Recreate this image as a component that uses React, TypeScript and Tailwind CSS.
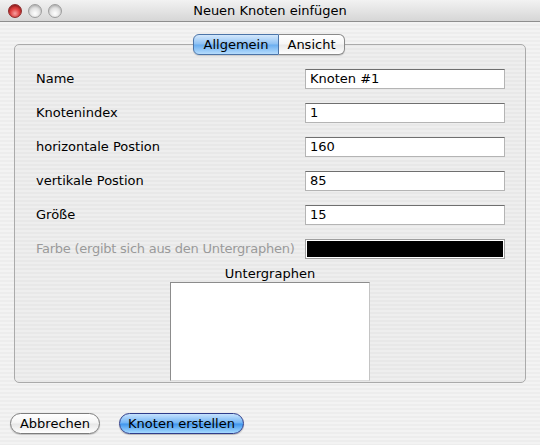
import React from 'react';

const fields = [
    { label: 'Name', value: 'Knoten #1' },
    { label: 'Knotenindex', value: '1' },
    { label: 'horizontale Postion', value: '160' },
    { label: 'vertikale Postion', value: '85' },
    { label: 'Größe', value: '15' },
];

function Light({ red }: { red?: boolean }) {
    return (
        <div
            className={
                red
                    ? 'w-[14px] h-[14px] rounded-full border border-[#8c2a2a] bg-[radial-gradient(circle_at_50%_70%,#f7a0a0_0%,#e0403f_45%,#a51c1c_100%)] shadow-[inset_0_1px_2px_rgba(0,0,0,0.3)]'
                    : 'w-[14px] h-[14px] rounded-full border border-[#9d9d9d] bg-[radial-gradient(circle_at_50%_70%,#ffffff_0%,#e2e2e2_50%,#b9b9b9_100%)] shadow-[inset_0_1px_2px_rgba(0,0,0,0.15)]'
            }
        />
    );
}

export default function App() {
    return (
        <div className="w-[540px] h-[445px] flex flex-col overflow-hidden text-[13px] text-black font-['DejaVu_Sans',sans-serif] bg-[repeating-linear-gradient(180deg,#ededed_0px,#ededed_2px,#f3f3f3_2px,#f3f3f3_4px)]">
            {/* title bar */}
            <div className="relative h-[22px] flex items-center justify-center border-b border-[#8e8e8e] bg-[linear-gradient(180deg,#f2f2f2,#d6d6d6)]">
                <div className="absolute left-[8px] top-[4px] flex gap-[6px]">
                    <Light red />
                    <Light />
                    <Light />
                </div>
                <span className="text-[13px]">Neuen Knoten einfügen</span>
            </div>

            <div className="flex-1 flex flex-col px-[14px] pt-[22px]">
                <div className="relative h-[339px] border border-[#aaaaaa] rounded-[5px] bg-black/[0.02] flex flex-col">
                    {/* tabs */}
                    <div className="absolute left-0 right-0 -top-[11px] flex justify-center">
                        <div className="flex ml-[-2px] h-[21px] shadow-[0_1px_1px_rgba(0,0,0,0.15)] rounded-[6px]">
                            <div className="w-[86px] flex items-center justify-center rounded-l-[6px] border border-[#4b74a8] bg-[linear-gradient(180deg,#d4e8fc_0%,#8ec1f3_48%,#6aaef0_52%,#b6dcfc_100%)]">
                                Allgemein
                            </div>
                            <div className="w-[66px] flex items-center justify-center rounded-r-[6px] border border-l-0 border-[#8a8a8a] bg-[linear-gradient(180deg,#ffffff_0%,#f6f6f6_48%,#e9e9e9_52%,#ffffff_100%)]">
                                Ansicht
                            </div>
                        </div>
                    </div>

                    <div className="flex flex-col gap-[14px] pt-[24px] pl-[21px] pr-[20px]">
                        {fields.map((f) => (
                            <div key={f.label} className="flex items-center justify-between h-[20px]">
                                <span>{f.label}</span>
                                <div className="w-[200px] h-[20px] flex items-center pl-[4px] bg-white border border-[#b4b4b4] border-t-[#6f6f6f]">
                                    {f.value}
                                </div>
                            </div>
                        ))}
                        <div className="flex items-center justify-between h-[20px]">
                            <span className="text-[#9a9a9a] tracking-[-0.25px]">Farbe (ergibt sich aus den Untergraphen)</span>
                            <div className="w-[200px] h-[20px] p-[1px] bg-white border border-[#9f9f9f]">
                                <div className="w-full h-full bg-black" />
                            </div>
                        </div>
                    </div>

                    <div className="flex flex-col items-center mt-[7px]">
                        <span className="leading-[16px]">Untergraphen</span>
                        <div className="w-[200px] h-[99px] bg-white border border-[#8c8c8c] border-b-[#dcdcdc] border-r-[#c4c4c4]" />
                    </div>
                </div>

                <div className="flex gap-[19px] mt-[30px] ml-[-4px]">
                    <div className="w-[90px] h-[21px] flex items-center justify-center rounded-full border border-[#7c7c7c] bg-[linear-gradient(180deg,#ffffff_0%,#f4f4f4_48%,#e6e6e6_52%,#ffffff_100%)] shadow-[0_1px_1px_rgba(0,0,0,0.2)]">
                        Abbrechen
                    </div>
                    <div className="w-[125px] h-[21px] flex items-center justify-center rounded-full border border-[#2f3d8a] bg-[linear-gradient(180deg,#c6e2fd_0%,#6fb3f4_48%,#3f95ec_52%,#a6daff_100%)] shadow-[0_1px_1px_rgba(0,0,0,0.25)]">
                        Knoten erstellen
                    </div>
                </div>
            </div>
        </div>
    );
}
